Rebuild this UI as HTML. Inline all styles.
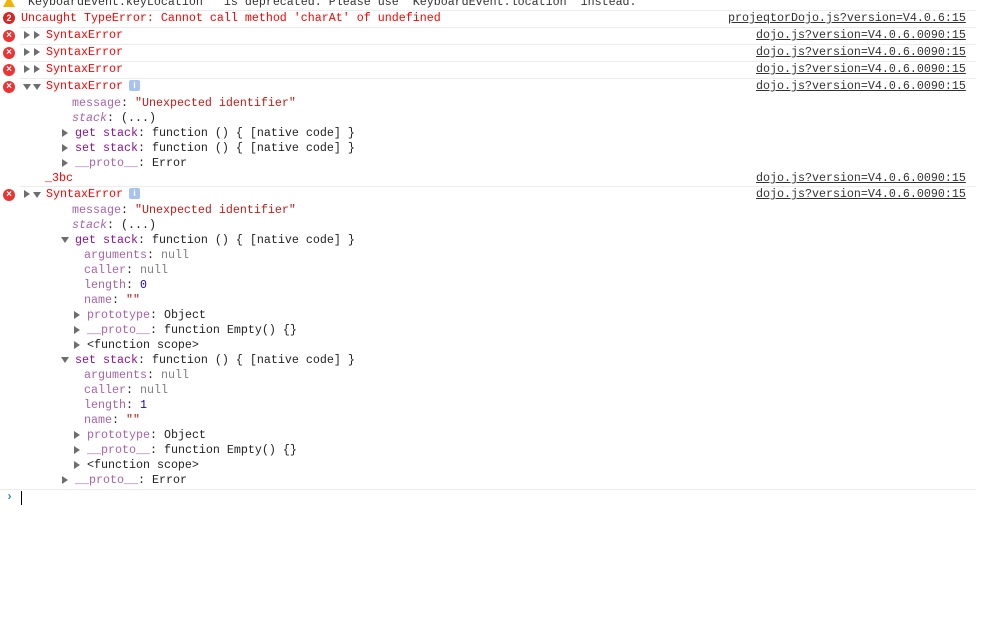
<!DOCTYPE html>
<html><head><style>
html,body{margin:0;padding:0;background:#fff;width:985px;height:618px;overflow:hidden}
body{position:relative;font-family:"Liberation Mono",monospace;font-size:11.67px;color:#222}
.l{position:absolute;white-space:pre;line-height:15px;height:15px}
.r{color:#f00}
.sep{position:absolute;left:20px;width:956px;height:1px;background:#ececec}
.lnk{position:absolute;white-space:pre;line-height:15px;text-decoration:underline;color:#333}
.p{color:#881391}.pl{color:#a864a8}.s{color:#c41a16}.n{color:#1c00cf}.g{color:#808080}
.ic{position:absolute;left:3px;width:12px;height:12px;border-radius:50%;background:#e33;color:#fff;font:bold 10px "Liberation Sans",sans-serif;text-align:center;line-height:12px}
.tr{position:absolute;width:0;height:0}
.tr.rt{border-top:4px solid transparent;border-bottom:4px solid transparent;border-left:6px solid #6e6e6e}
.tr.dn{border-left:4px solid transparent;border-right:4px solid transparent;border-top:6px solid #6e6e6e}
.info{display:inline-block;width:11px;height:11px;background:#a7c3ee;border-radius:2px;color:#fff;font:bold 9px "Liberation Sans",sans-serif;text-align:center;line-height:11px;vertical-align:middle;margin-left:6px}
</style></head><body>

<div style="position:absolute;left:3px;top:-4px;width:0;height:0;border-left:6px solid transparent;border-right:6px solid transparent;border-bottom:11px solid #f2b400"></div>
<div class="l" style="left:21px;top:-5px;color:#333">'KeyboardEvent.keyLocation'' is deprecated. Please use 'KeyboardEvent.location' instead.</div>
<div class="sep" style="top:10px"></div>

<div class="ic" style="top:12px;background:#d22;font-size:9px">2</div>
<div class="l r" style="left:21px;top:11px">Uncaught TypeError: Cannot call method 'charAt' of undefined</div>
<div class="lnk" style="left:728px;top:11px">projeqtorDojo.js?version=V4.0.6:15</div>
<div class="sep" style="top:27px"></div>

<div class="ic" style="top:30px">×</div><div class="tr rt" style="left:24px;top:31px"></div><div class="tr rt" style="left:34px;top:31px"></div>
<div class="l r" style="left:46px;top:28px">SyntaxError</div><div class="lnk" style="left:756px;top:28px">dojo.js?version=V4.0.6.0090:15</div>
<div class="sep" style="top:44px"></div>
<div class="ic" style="top:47px">×</div><div class="tr rt" style="left:24px;top:48px"></div><div class="tr rt" style="left:34px;top:48px"></div>
<div class="l r" style="left:46px;top:45px">SyntaxError</div><div class="lnk" style="left:756px;top:45px">dojo.js?version=V4.0.6.0090:15</div>
<div class="sep" style="top:61px"></div>
<div class="ic" style="top:64px">×</div><div class="tr rt" style="left:24px;top:65px"></div><div class="tr rt" style="left:34px;top:65px"></div>
<div class="l r" style="left:46px;top:62px">SyntaxError</div><div class="lnk" style="left:756px;top:62px">dojo.js?version=V4.0.6.0090:15</div>
<div class="sep" style="top:78px"></div>
<div class="ic" style="top:81px">×</div><div class="tr dn" style="left:23px;top:84px"></div><div class="tr dn" style="left:33px;top:84px"></div>
<div class="l r" style="left:46px;top:79px">SyntaxError<span class="info">i</span></div><div class="lnk" style="left:756px;top:79px">dojo.js?version=V4.0.6.0090:15</div>

<div class="l" style="left:72px;top:96px"><span class="pl">message</span>: <span class="s">"Unexpected identifier"</span></div>
<div class="l" style="left:72px;top:111px"><i class="pl">stack</i>: (...)</div>
<div class="tr rt" style="left:62px;top:129px"></div><div class="l" style="left:75px;top:126px"><span class="p">get stack</span>: function () { [native code] }</div>
<div class="tr rt" style="left:62px;top:144px"></div><div class="l" style="left:75px;top:141px"><span class="p">set stack</span>: function () { [native code] }</div>
<div class="tr rt" style="left:62px;top:159px"></div><div class="l" style="left:75px;top:156px"><span class="pl">__proto__</span>: Error</div>
<div class="l r" style="left:45px;top:171px">_3bc</div><div class="lnk" style="left:756px;top:171px">dojo.js?version=V4.0.6.0090:15</div>
<div class="sep" style="top:186px"></div>

<div class="ic" style="top:189px">×</div><div class="tr rt" style="left:24px;top:190px"></div><div class="tr dn" style="left:33px;top:192px"></div>
<div class="l r" style="left:46px;top:187px">SyntaxError<span class="info">i</span></div><div class="lnk" style="left:756px;top:187px">dojo.js?version=V4.0.6.0090:15</div>

<div class="l" style="left:72px;top:203px"><span class="pl">message</span>: <span class="s">"Unexpected identifier"</span></div>
<div class="l" style="left:72px;top:218px"><i class="pl">stack</i>: (...)</div>
<div class="tr dn" style="left:61px;top:237px"></div><div class="l" style="left:75px;top:233px"><span class="p">get stack</span>: function () { [native code] }</div>
<div class="l" style="left:84px;top:248px"><span class="pl">arguments</span>: <span class="g">null</span></div>
<div class="l" style="left:84px;top:263px"><span class="pl">caller</span>: <span class="g">null</span></div>
<div class="l" style="left:84px;top:278px"><span class="pl">length</span>: <span class="n">0</span></div>
<div class="l" style="left:84px;top:293px"><span class="pl">name</span>: <span class="s">""</span></div>
<div class="tr rt" style="left:74px;top:311px"></div><div class="l" style="left:87px;top:308px"><span class="pl">prototype</span>: Object</div>
<div class="tr rt" style="left:74px;top:326px"></div><div class="l" style="left:87px;top:323px"><span class="pl">__proto__</span>: function Empty() {}</div>
<div class="tr rt" style="left:74px;top:341px"></div><div class="l" style="left:87px;top:338px">&lt;function scope&gt;</div>
<div class="tr dn" style="left:61px;top:357px"></div><div class="l" style="left:75px;top:353px"><span class="p">set stack</span>: function () { [native code] }</div>
<div class="l" style="left:84px;top:368px"><span class="pl">arguments</span>: <span class="g">null</span></div>
<div class="l" style="left:84px;top:383px"><span class="pl">caller</span>: <span class="g">null</span></div>
<div class="l" style="left:84px;top:398px"><span class="pl">length</span>: <span class="n">1</span></div>
<div class="l" style="left:84px;top:413px"><span class="pl">name</span>: <span class="s">""</span></div>
<div class="tr rt" style="left:74px;top:431px"></div><div class="l" style="left:87px;top:428px"><span class="pl">prototype</span>: Object</div>
<div class="tr rt" style="left:74px;top:446px"></div><div class="l" style="left:87px;top:443px"><span class="pl">__proto__</span>: function Empty() {}</div>
<div class="tr rt" style="left:74px;top:461px"></div><div class="l" style="left:87px;top:458px">&lt;function scope&gt;</div>
<div class="tr rt" style="left:62px;top:476px"></div><div class="l" style="left:75px;top:473px"><span class="pl">__proto__</span>: Error</div>
<div class="sep" style="top:489px;left:0;width:976px"></div>

<div class="l" style="left:6px;top:490px;color:#367cf1;font-weight:bold">›</div>
<div style="position:absolute;left:21px;top:491px;width:1px;height:14px;background:#000"></div>
</body></html>
